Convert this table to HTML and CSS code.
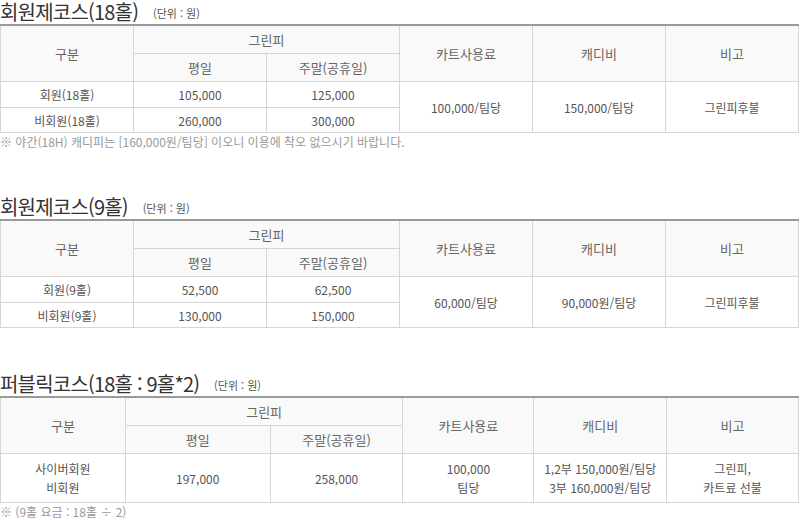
FILE: index.html
```html
<!DOCTYPE html>
<html lang="ko">
<head>
<meta charset="utf-8">
<title>요금안내</title>
<link rel="stylesheet" href="styles.css">
</head>
<body>
<section class="fee">
  <h2 class="fee-title">회원제코스(18홀) <span class="unit">(단위 : 원)</span></h2>
  <table class="fee-table fixed">
    <thead>
      <tr class="h1">
        <th rowspan="2">구분</th>
        <th colspan="2">그린피</th>
        <th rowspan="2">카트사용료</th>
        <th rowspan="2">캐디비</th>
        <th rowspan="2">비고</th>
      </tr>
      <tr class="h2">
        <th>평일</th>
        <th>주말(공휴일)</th>
      </tr>
    </thead>
    <tbody>
      <tr class="r1">
        <td>회원(18홀)</td>
        <td>105,000</td>
        <td>125,000</td>
        <td rowspan="2">100,000/팀당</td>
        <td rowspan="2">150,000/팀당</td>
        <td rowspan="2">그린피후불</td>
      </tr>
      <tr class="r2">
        <td>비회원(18홀)</td>
        <td>260,000</td>
        <td>300,000</td>
      </tr>
    </tbody>
  </table>
  <p class="note">※ 야간(18H) 캐디피는 [160,000원/팀당] 이오니 이용에 착오 없으시기 바랍니다.</p>
</section>

<section class="fee">
  <h2 class="fee-title">회원제코스(9홀) <span class="unit">(단위 : 원)</span></h2>
  <table class="fee-table fixed">
    <thead>
      <tr class="h1">
        <th rowspan="2">구분</th>
        <th colspan="2">그린피</th>
        <th rowspan="2">카트사용료</th>
        <th rowspan="2">캐디비</th>
        <th rowspan="2">비고</th>
      </tr>
      <tr class="h2">
        <th>평일</th>
        <th>주말(공휴일)</th>
      </tr>
    </thead>
    <tbody>
      <tr class="r1">
        <td>회원(9홀)</td>
        <td>52,500</td>
        <td>62,500</td>
        <td rowspan="2">60,000/팀당</td>
        <td rowspan="2">90,000원/팀당</td>
        <td rowspan="2">그린피후불</td>
      </tr>
      <tr class="r2">
        <td>비회원(9홀)</td>
        <td>130,000</td>
        <td>150,000</td>
      </tr>
    </tbody>
  </table>
</section>

<section class="fee">
  <h2 class="fee-title">퍼블릭코스(18홀 : 9홀*2) <span class="unit">(단위 : 원)</span></h2>
  <table class="fee-table public">
    <colgroup>
      <col class="c1"><col class="c2"><col class="c3"><col class="c4"><col class="c5"><col class="c6">
    </colgroup>
    <thead>
      <tr class="h1">
        <th rowspan="2">구분</th>
        <th colspan="2">그린피</th>
        <th rowspan="2">카트사용료</th>
        <th rowspan="2">캐디비</th>
        <th rowspan="2">비고</th>
      </tr>
      <tr class="h2">
        <th>평일</th>
        <th>주말(공휴일)</th>
      </tr>
    </thead>
    <tbody>
      <tr class="r3">
        <td>사이버회원<br>비회원</td>
        <td>197,000</td>
        <td>258,000</td>
        <td>100,000<br>팀당</td>
        <td>1,2부 150,000원/팀당<br>3부 160,000원/팀당</td>
        <td>그린피,<br>카트료 선불</td>
      </tr>
    </tbody>
  </table>
  <p class="note">※ (9홀 요금 : 18홀 ÷ 2)</p>
</section>
</body>
</html>
```

FILE: styles.css
```css
html, body {
  margin: 0;
  padding: 0;
  background: #fff;
}
body {
  font-family: "Noto Sans CJK KR", "Noto Sans", sans-serif;
  color: #555;
  width: 799px;
}
.fee {
  margin-bottom: 44px;
}
.fee-title {
  margin: 0;
  height: 24px;
  font-size: 20px;
  line-height: 24px;
  font-weight: 400;
  color: #333;
  letter-spacing: -0.8px;
  white-space: nowrap;
}
.unit {
  font-size: 11px;
  color: #555;
  margin-left: 10px;
  letter-spacing: 0;
  vertical-align: 2px;
}
.fee-table {
  width: 799px;
  border-collapse: collapse;
  border-top: 2px solid #9a9a9a;
}
.fee-table.fixed {
  table-layout: fixed;
}
.fee-table th,
.fee-table td {
  border: 1px solid #d6d6d6;
  text-align: center;
  padding: 0;
  font-weight: 400;
}
.fee-table th {
  background: #f9f9f9;
  color: #666;
  font-size: 13px;
}
.fee-table td {
  font-size: 12px;
  color: #555;
}
.fee-table tr.h1 th { height: 27px; }
.fee-table tr.h2 th { height: 27px; }
.fee-table tr.r1 td { height: 25px; }
.fee-table tr.r2 td { height: 24px; }
.fee-table tr.r3 td { height: 48px; line-height: 19px; }
.public .c1 { width: 125px; }
.public .c2 { width: 145px; }
.public .c3 { width: 133px; }
.public .c4 { width: 131px; }
.public .c5 { width: 133px; }
.public .c6 { width: 132px; }
.note {
  margin: 0;
  font-size: 12px;
  line-height: 18px;
  color: #999;
}
```
